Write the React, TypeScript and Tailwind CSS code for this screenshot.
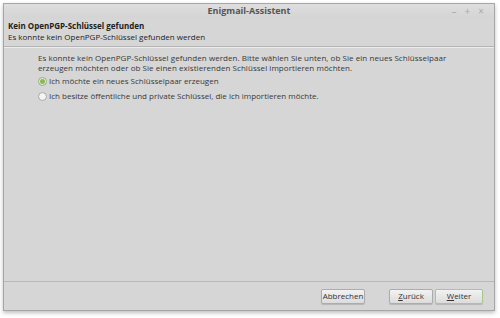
import React from "react";

const font = { fontFamily: '"Open Sans", "DejaVu Sans", sans-serif' };

function Radio({ checked }: { checked?: boolean }) {
  return (
    <span
      className={`inline-flex h-[9px] w-[9px] items-center justify-center rounded-full border ${
        checked ? "border-[#8fb36a] bg-[#e9e9e9]" : "border-[#a8a8a8] bg-[#f4f4f4]"
      }`}
    >
      {checked && <span className="h-[5px] w-[5px] rounded-full bg-[#8ab85c]" />}
    </span>
  );
}

function Btn({ children, primary }: { children: React.ReactNode; primary?: boolean }) {
  return (
    <button
      className={`flex h-[15px] items-center justify-center rounded-[2px] border bg-gradient-to-b from-[#f2f2f2] to-[#dcdcdc] text-[8px] text-[#333] shadow-[0_1px_1px_rgba(0,0,0,0.15)] ${
        primary ? "w-[48px] border-[#a4c98a]" : "w-[44px] border-[#acacac]"
      }`}
    >
      {children}
    </button>
  );
}

export default function App() {
  return (
    <div className="h-[318px] w-[500px] bg-white pl-[3px] pt-[3px]" style={font}>
      <div className="flex h-[308px] w-[492px] flex-col border border-[#a6a6a6] bg-[#d6d6d6] shadow-[0_2px_4px_rgba(0,0,0,0.25)]">
        {/* Titlebar */}
        <div className="relative flex h-[14px] items-center justify-center bg-gradient-to-b from-[#dedede] to-[#d4d4d4]">
          <span className="text-[9px] font-bold text-[#555]">Enigmail-Assistent</span>
          <div className="absolute right-[10px] top-0 flex gap-[8px] text-[10px] text-[#aaa]">
            <span>–</span>
            <span>+</span>
            <span>×</span>
          </div>
        </div>

        {/* Header */}
        <div className="border-b border-[#b4b4b4] px-[4px] pb-[4px] pt-[2px] text-[8px] leading-[11px] text-[#222]">
          <div className="font-bold">Kein OpenPGP-Schlüssel gefunden</div>
          <div>Es konnte kein OpenPGP-Schlüssel gefunden werden</div>
        </div>

        {/* Body */}
        <div className="flex-1 border-t border-[#ececec] pl-[34px] pt-[5px] text-[8px] leading-[10px] text-[#383838]">
          <p className="w-[420px] tracking-[0.05px]">
            Es konnte kein OpenPGP-Schlüssel gefunden werden. Bitte wählen Sie unten, ob Sie ein neues Schlüsselpaar
            erzeugen möchten oder ob Sie einen existierenden Schlüssel importieren möchten.
          </p>
          <div className="mt-[3px] flex items-center gap-[2px]">
            <Radio checked />
            <span>Ich möchte ein neues Schlüsselpaar erzeugen</span>
          </div>
          <div className="mt-[5px] flex items-center gap-[2px]">
            <Radio />
            <span>Ich besitze öffentliche und private Schlüssel, die ich importieren möchte.</span>
          </div>
        </div>

        {/* Footer */}
        <div className="flex h-[29px] items-center border-t border-[#b8b8b8] pr-[11px]">
          <div className="flex-1" />
          <Btn>Abbrechen</Btn>
          <div className="w-[24px]" />
          <Btn>
            <span>
              <span className="underline">Z</span>urück
            </span>
          </Btn>
          <div className="w-[2px]" />
          <Btn primary>
            <span>
              <span className="underline">W</span>eiter
            </span>
          </Btn>
        </div>
      </div>
    </div>
  );
}
